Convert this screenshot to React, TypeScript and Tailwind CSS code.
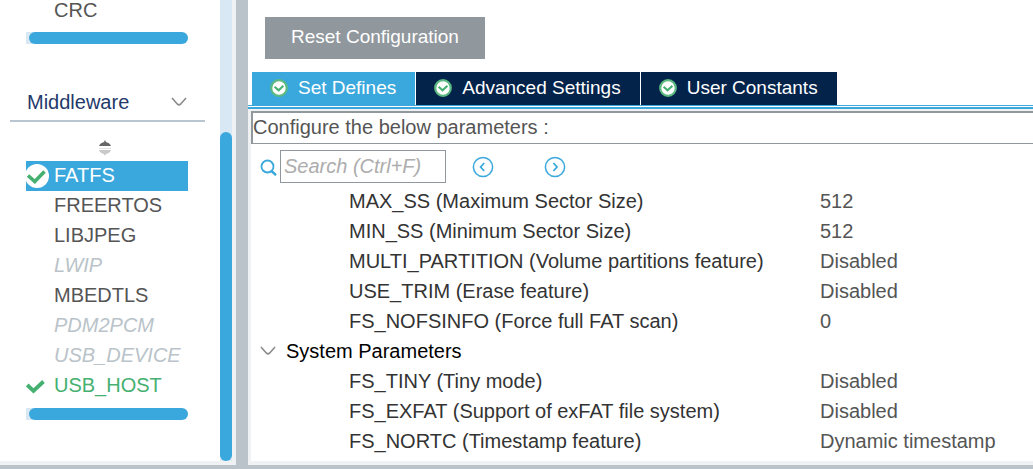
import React from "react";

type ItemState = "selected" | "enabled" | "normal" | "unavailable";

const middleware: { name: string; state: ItemState }[] = [
  { name: "FATFS", state: "selected" },
  { name: "FREERTOS", state: "normal" },
  { name: "LIBJPEG", state: "normal" },
  { name: "LWIP", state: "unavailable" },
  { name: "MBEDTLS", state: "normal" },
  { name: "PDM2PCM", state: "unavailable" },
  { name: "USB_DEVICE", state: "unavailable" },
  { name: "USB_HOST", state: "enabled" },
];

const itemStyles: Record<ItemState, string> = {
  selected: "bg-[#3aa8dc] text-white",
  enabled: "text-[#45b070]",
  normal: "text-[#555555]",
  unavailable: "italic text-[#b9c3c9]",
};

const volumeParameters: [string, string][] = [
  ["MAX_SS (Maximum Sector Size)", "512"],
  ["MIN_SS (Minimum Sector Size)", "512"],
  ["MULTI_PARTITION (Volume partitions feature)", "Disabled"],
  ["USE_TRIM (Erase feature)", "Disabled"],
  ["FS_NOFSINFO (Force full FAT scan)", "0"],
];

const systemParameters: [string, string][] = [
  ["FS_TINY (Tiny mode)", "Disabled"],
  ["FS_EXFAT (Support of exFAT file system)", "Disabled"],
  ["FS_NORTC (Timestamp feature)", "Dynamic timestamp"],
];

const tabs = ["Set Defines", "Advanced Settings", "User Constants"];

function Chevron() {
  return (
    <svg width="16" height="10" viewBox="0 0 16 10" fill="none" aria-hidden="true">
      <path d="M1 1 L6.5 7.2 Q8 8.6 9.5 7.2 L15 1" stroke="#8a8a8a" strokeWidth="1.6" />
    </svg>
  );
}

function Check({ disc }: { disc: boolean }) {
  return (
    <svg width="24" height="24" viewBox="0 0 24 24" fill="none" aria-hidden="true">
      {disc && <circle cx="11" cy="12" r="12" fill="#fff" />}
      {disc ? (
        <path d="M2 11.5 L8.8 17.5 L18.5 7.5" stroke="#45b070" strokeWidth="3.6" />
      ) : (
        <path d="M1.2 11 L7.5 17 L17.5 7.5" stroke="#45b070" strokeWidth="3.8" />
      )}
    </svg>
  );
}

function TabCheck() {
  return (
    <svg width="18" height="18" viewBox="0 0 18 18" fill="none" aria-hidden="true">
      <circle cx="9" cy="9" r="7.8" fill="#fff" stroke="#5cb981" strokeWidth="2.2" />
      <path d="M4.6 7.8 L8.6 11.3 L13.4 6.8" stroke="#45b070" strokeWidth="2" />
    </svg>
  );
}

function ScrollBar() {
  return (
    <div className="h-3 bg-linear-to-r from-[#d9e8f5] from-10% to-white to-10% pl-[3px]">
      <div className="h-full rounded-full bg-[#3aa8dc]" />
    </div>
  );
}

function ParameterRow({ name, value }: { name: string; value: string }) {
  return (
    <tr className="h-[30px]">
      <th scope="row" className="p-0 pl-[98px] text-left font-normal text-[#333333]">
        {name}
      </th>
      <td className="p-0 text-[#555555]">{value}</td>
    </tr>
  );
}

function Sidebar() {
  return (
    <nav className="flex w-[220px] shrink-0 flex-col">
      <div className="pr-8 pl-[26px]">
        <a href="#crc" className="flex h-5 items-center pl-7 leading-5 text-[#555555]">
          CRC
        </a>
        <div className="mt-3">
          <ScrollBar />
        </div>
      </div>
      <button
        type="button"
        aria-expanded="true"
        className="mt-10 mr-[15px] ml-[10px] flex h-[38px] items-center justify-between border-b-2 border-[#b9c6d2] pr-[18px] pl-[17px] text-left text-[#23396b]"
      >
        <span>Middleware</span>
        <Chevron />
      </button>
      <div className="flex flex-col pr-8 pl-[26px]">
        <div className="flex h-[39px] items-center justify-center pt-3">
          <svg width="12" height="16" viewBox="0 0 12 16" className="mr-1" aria-hidden="true">
            <path d="M0 6 Q1 3 5 2 L6 0 L7 2 Q11 3 12 6 Z" fill="#666" />
            <path d="M0 8 H12 V9 H0 Z" fill="#e2e2e2" />
            <path d="M0 10 H12 Q11 13 7 14 L6 16 L5 14 Q1 13 0 10 Z" fill="#c9c9c9" />
          </svg>
        </div>
        <ul>
          {middleware.map(({ name, state }) => (
            <li key={name}>
              <a
                href={"#" + name.toLowerCase()}
                className={"flex h-[30px] items-center pb-[2px] " + itemStyles[state]}
              >
                <span className="w-7 pt-px">
                  {state === "selected" && <Check disc />}
                  {state === "enabled" && <Check disc={false} />}
                </span>
                {name}
              </a>
            </li>
          ))}
        </ul>
        <div className="mt-[7px]">
          <ScrollBar />
        </div>
      </div>
    </nav>
  );
}

export default function App() {
  return (
    <div className="flex min-h-screen flex-col overflow-hidden bg-[#b9c3c9] pb-1 font-['Liberation_Sans',Arial,sans-serif] text-[20px] leading-6">
      <div className="flex flex-1">
        <div className="flex shrink-0 border-r-4 border-b-4 border-[#f0f1f2] bg-white">
          <Sidebar />
          <div className="flex w-3 flex-col bg-[#d9e8f5] pt-[132px]">
            <div className="flex-1 rounded-full bg-[#3aa8dc]" />
          </div>
        </div>
        <main className="ml-3 flex min-w-0 flex-1 flex-col border-b-4 border-[#f0f1f2] bg-white">
          <div className="px-[17px] pt-[17px] pb-[13px]">
            <button type="button" className="h-[42px] bg-[#90979d] px-[26px] pb-[2px] text-[19px] text-white">
              Reset Configuration
            </button>
          </div>
          <div role="tablist" className="flex gap-px pl-1">
            {tabs.map((tab, index) => (
              <button
                key={tab}
                type="button"
                role="tab"
                aria-selected={index === 0}
                className={
                  "flex h-[33px] items-center gap-[10px] pr-[19px] pb-[2px] pl-[18px] text-[19px] whitespace-nowrap text-white " +
                  (index === 0 ? "bg-[#3aa8dc]" : "bg-[#03234b]")
                }
              >
                <TabCheck />
                {tab}
              </button>
            ))}
          </div>
          <div className="h-1 border-t border-b-2 border-[#3aa8dc]" />
          <div className="flex-1 border-l-[3px] border-[#f0f1f2]">
            <div className="border-t-2 border-[#f0f1f2]">
              <p className="h-[33px] border-t-2 border-b border-l-2 border-[#90979d] leading-[29px] text-[#555555]">
                Configure the below parameters :
              </p>
            </div>
            <div className="flex h-[42px] items-center pt-[3px] pl-[9px]">
              <label htmlFor="search" aria-label="Search" className="w-5">
                <svg width="17" height="18" viewBox="0 0 17 18" fill="none" stroke="#3aa8dc" aria-hidden="true">
                  <circle cx="7.5" cy="8.5" r="6" strokeWidth="1.8" />
                  <path d="M11.5 13 L16 17.2" strokeWidth="2.4" />
                </svg>
              </label>
              <input
                id="search"
                type="text"
                placeholder="Search (Ctrl+F)"
                className="h-[33px] w-[166px] border border-[#90979d] px-[3px] italic outline-none placeholder:text-[#adadad]"
              />
              <button type="button" aria-label="Previous match" className="ml-[26px]">
                <svg width="22" height="22" viewBox="0 0 22 22" fill="none" stroke="#3aa8dc">
                  <circle cx="11" cy="11" r="9.6" strokeWidth="1.5" />
                  <path d="M12.2 7 L8.6 11 L12.2 15" strokeWidth="1.8" />
                </svg>
              </button>
              <button type="button" aria-label="Next match" className="ml-[50px]">
                <svg width="22" height="22" viewBox="0 0 22 22" fill="none" stroke="#3aa8dc">
                  <circle cx="11" cy="11" r="9.6" strokeWidth="1.5" />
                  <path d="M9.4 7 L13 11 L9.4 15" strokeWidth="1.8" />
                </svg>
              </button>
            </div>
            <table className="w-full table-fixed border-collapse">
              <colgroup>
                <col className="w-[569px]" />
                <col />
              </colgroup>
              <tbody>
                {volumeParameters.map(([name, value]) => (
                  <ParameterRow key={name} name={name} value={value} />
                ))}
                <tr className="h-[30px]">
                  <th colSpan={2} className="p-0 pl-[9px] text-left font-normal text-black">
                    <button type="button" aria-expanded="true" className="flex items-center gap-[10px]">
                      <Chevron />
                      System Parameters
                    </button>
                  </th>
                </tr>
                {systemParameters.map(([name, value]) => (
                  <ParameterRow key={name} name={name} value={value} />
                ))}
              </tbody>
            </table>
          </div>
        </main>
      </div>
    </div>
  );
}
